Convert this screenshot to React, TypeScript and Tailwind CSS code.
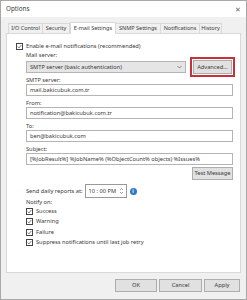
import React from "react";

const font = { fontFamily: '"Noto Sans", "Liberation Sans", sans-serif' };

function Check() {
  return (
    <span className="w-[7px] h-[7px] border border-[#444] bg-white flex items-center justify-center shrink-0">
      <svg width="5" height="5" viewBox="0 0 10 10">
        <path d="M1.5 5.2 L4 7.8 L8.6 2" stroke="#333" strokeWidth="1.3" fill="none" />
      </svg>
    </span>
  );
}

function CheckRow({ label }: { label: string }) {
  return (
    <div className="h-[10.5px] flex items-center gap-[3px]">
      <Check />
      <span>{label}</span>
    </div>
  );
}

function Input({ value }: { value: string }) {
  return (
    <div className="h-[12px] border border-[#b4b4b4] bg-white flex items-center pl-[3px]">
      {value}
    </div>
  );
}

function Label({ text }: { text: string }) {
  return <div className="h-[8px] flex items-center">{text}</div>;
}

function Btn({ text, w }: { text: string; w: string }) {
  return (
    <div className={`${w} h-[13px] bg-[#e1e1e1] border border-[#adadad] flex items-center justify-center`}>
      {text}
    </div>
  );
}

export default function App() {
  const tabs = [
    { t: "I/O Control", w: "w-[35px]" },
    { t: "Security", w: "w-[28px]" },
    { t: "E-mail Settings", w: "w-[46px]", sel: true },
    { t: "SNMP Settings", w: "w-[46px]" },
    { t: "Notifications", w: "w-[40px]" },
    { t: "History", w: "w-[23px]" },
  ];
  return (
    <div className="w-[247px] h-[300px] bg-[#f0f0f0] border border-[#a8a8a8] flex flex-col text-[5.7px] text-[#3a3a3a] overflow-hidden" style={font}>
      <div className="h-[16px] bg-white flex items-center justify-between pl-[5px] pr-[5px] shrink-0">
        <span className="text-[6.3px] text-[#3a3a3a]">Options</span>
        <span className="text-[7px] text-[#666] leading-none">✕</span>
      </div>
      <div className="flex flex-col px-[5px]">
        <div className="h-[16px] flex items-end pl-[2px] text-[5.5px]">
          {tabs.map((tab) =>
            tab.sel ? (
              <div key={tab.t} className={`${tab.w} h-[12px] bg-white border border-[#d9d9d9] border-b-0 flex items-center justify-center -mb-px relative z-10`}>
                {tab.t}
              </div>
            ) : (
              <div key={tab.t} className={`${tab.w} h-[10px] bg-[#f0f0f0] border border-[#d9d9d9] border-b-0 flex items-center justify-center -ml-px first:ml-0`}>
                {tab.t}
              </div>
            )
          )}
        </div>
        <div className="h-[240px] bg-white border border-[#d9d9d9] flex flex-col pl-[9px] pr-[7px] pt-[7px]">
          <div className="h-[10px] flex items-center gap-[3px]">
            <Check />
            <span>Enable e-mail notifications (recommended)</span>
          </div>
          <div className="pl-[10px] flex flex-col">
            <Label text="Mail server:" />
            <div className="flex items-center gap-[7px] mt-[1px] h-[14px]">
              <div className="w-[160px] h-[12px] bg-[#e5e5e5] border border-[#b4b4b4] flex items-center justify-between pl-[3px] pr-[3px]">
                <span>SMTP server (basic authentication)</span>
                <svg width="5" height="4" viewBox="0 0 10 8">
                  <path d="M1 2 L5 6 L9 2" stroke="#555" strokeWidth="1.3" fill="none" />
                </svg>
              </div>
              <div className="w-[39px] h-[14px] bg-[#e1e1e1] border border-[#adadad] flex items-center justify-center outline-2 outline-offset-1 outline-[#c8303a]">
                Advanced...
              </div>
            </div>
            <div className="h-[2px]" />
            <Label text="SMTP server:" />
            <Input value="mail.bakicubuk.com.tr" />
            <div className="h-[3px]" />
            <Label text="From:" />
            <Input value="notification@bakicubuk.com.tr" />
            <div className="h-[3px]" />
            <Label text="To:" />
            <Input value="ben@bakicubuk.com" />
            <div className="h-[3px]" />
            <Label text="Subject:" />
            <Input value="[%JobResult%] %JobName% (%ObjectCount% objects) %Issues%" />
            <div className="flex justify-end mt-[2px]">
              <Btn text="Test Message" w="w-[41px]" />
            </div>
            <div className="h-[14px] flex items-center mt-[4px]">
              <span className="mr-[2px]">Send daily reports at:</span>
              <div className="w-[42px] h-[14px] bg-white border border-[#999] flex items-center justify-between pl-[3px] pr-[2px]">
                <span>10 : 00 PM</span>
                <svg width="5" height="8" viewBox="0 0 10 16">
                  <path d="M2 6 L5 3 L8 6" stroke="#666" strokeWidth="1.2" fill="none" />
                  <path d="M2 10 L5 13 L8 10" stroke="#666" strokeWidth="1.2" fill="none" />
                </svg>
              </div>
              <span className="ml-[3px] w-[7px] h-[7px] rounded-full bg-[#2a78c8] text-white flex items-center justify-center text-[5px] font-bold leading-none">i</span>
            </div>
            <div className="h-[8px] flex items-center">Notify on:</div>
            <CheckRow label="Success" />
            <CheckRow label="Warning" />
            <CheckRow label="Failure" />
            <CheckRow label="Suppress notifications until last job retry" />
          </div>
        </div>
        <div className="flex justify-end gap-[2px] mt-[6px] pr-[1px]">
          <Btn text="OK" w="w-[42px]" />
          <Btn text="Cancel" w="w-[43px]" />
          <Btn text="Apply" w="w-[36px]" />
        </div>
      </div>
    </div>
  );
}
